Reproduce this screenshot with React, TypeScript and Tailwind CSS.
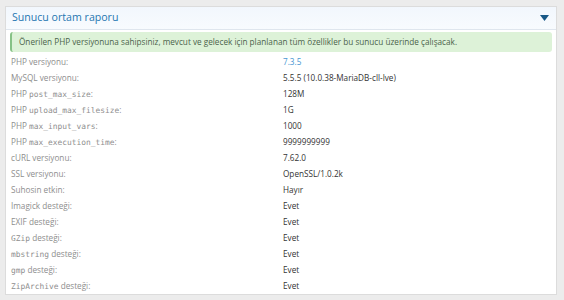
const MONO = "font-['DejaVu_Sans_Mono',monospace] text-[7.9px]"

const ROWS: { label: React.ReactNode; value: string; blue?: boolean }[] = [
  { label: 'PHP versiyonu:', value: '7.3.5', blue: true },
  { label: 'MySQL versiyonu:', value: '5.5.5 (10.0.38-MariaDB-cll-lve)' },
  { label: <>PHP <code className={MONO}>post_max_size</code>:</>, value: '128M' },
  { label: <>PHP <code className={MONO}>upload_max_filesize</code>:</>, value: '1G' },
  { label: <>PHP <code className={MONO}>max_input_vars</code>:</>, value: '1000' },
  { label: <>PHP <code className={MONO}>max_execution_time</code>:</>, value: '9999999999' },
  { label: 'cURL versiyonu:', value: '7.62.0' },
  { label: 'SSL versiyonu:', value: 'OpenSSL/1.0.2k' },
  { label: 'Suhosin etkin:', value: 'Hayır' },
  { label: 'Imagick desteği:', value: 'Evet' },
  { label: 'EXIF desteği:', value: 'Evet' },
  { label: <><code className={MONO}>GZip</code> desteği:</>, value: 'Evet' },
  { label: <><code className={MONO}>mbstring</code> desteği:</>, value: 'Evet' },
  { label: <><code className={MONO}>gmp</code> desteği:</>, value: 'Evet' },
  { label: <><code className={MONO}>ZipArchive</code> desteği:</>, value: 'Evet' },
]

export default function App() {
  return (
    <div className="h-[300px] w-[564px] overflow-hidden bg-[#ececec] pt-[6px] pl-[5px] pr-[7px] font-['Open_Sans',sans-serif]">
      <div className="h-[289px] border border-[#dcdcdc] bg-white">
        {/* header */}
        <div className="flex h-[23px] items-center justify-between border-b border-[#dfe6ee] bg-gradient-to-b from-[#f2f7fd] to-[#f8fbfe] pl-[6px] pr-[7px]">
          <span className="text-[10.6px] text-[#2577b1]">Sunucu ortam raporu</span>
          <svg width="9" height="6" viewBox="0 0 9 6">
            <path d="M0 0h9L4.5 6z" fill="#185886" />
          </svg>
        </div>

        <div className="px-[4px] pt-[2px]">
          <div className="flex h-[20px] items-center rounded-[3px] border-l-[2px] border-[#86c286] bg-[#ddf2d8] pl-[7px] text-[8.2px] text-[#4b634b]">
            Önerilen PHP versiyonuna sahipsiniz, mevcut ve gelecek için planlanan tüm özellikler bu sunucu üzerinde çalışacak.
          </div>

          <div className="mt-[2px]">
            {ROWS.map((r, i) => (
              <div key={i} className="flex h-[16px] items-center text-[8.2px]">
                <div className="w-[273px] pl-[1px] text-[#8e8e8e]">{r.label}</div>
                <div className={r.blue ? 'text-[#4796d2]' : 'text-[#333]'}>{r.value}</div>
              </div>
            ))}
          </div>
        </div>
      </div>
    </div>
  )
}
